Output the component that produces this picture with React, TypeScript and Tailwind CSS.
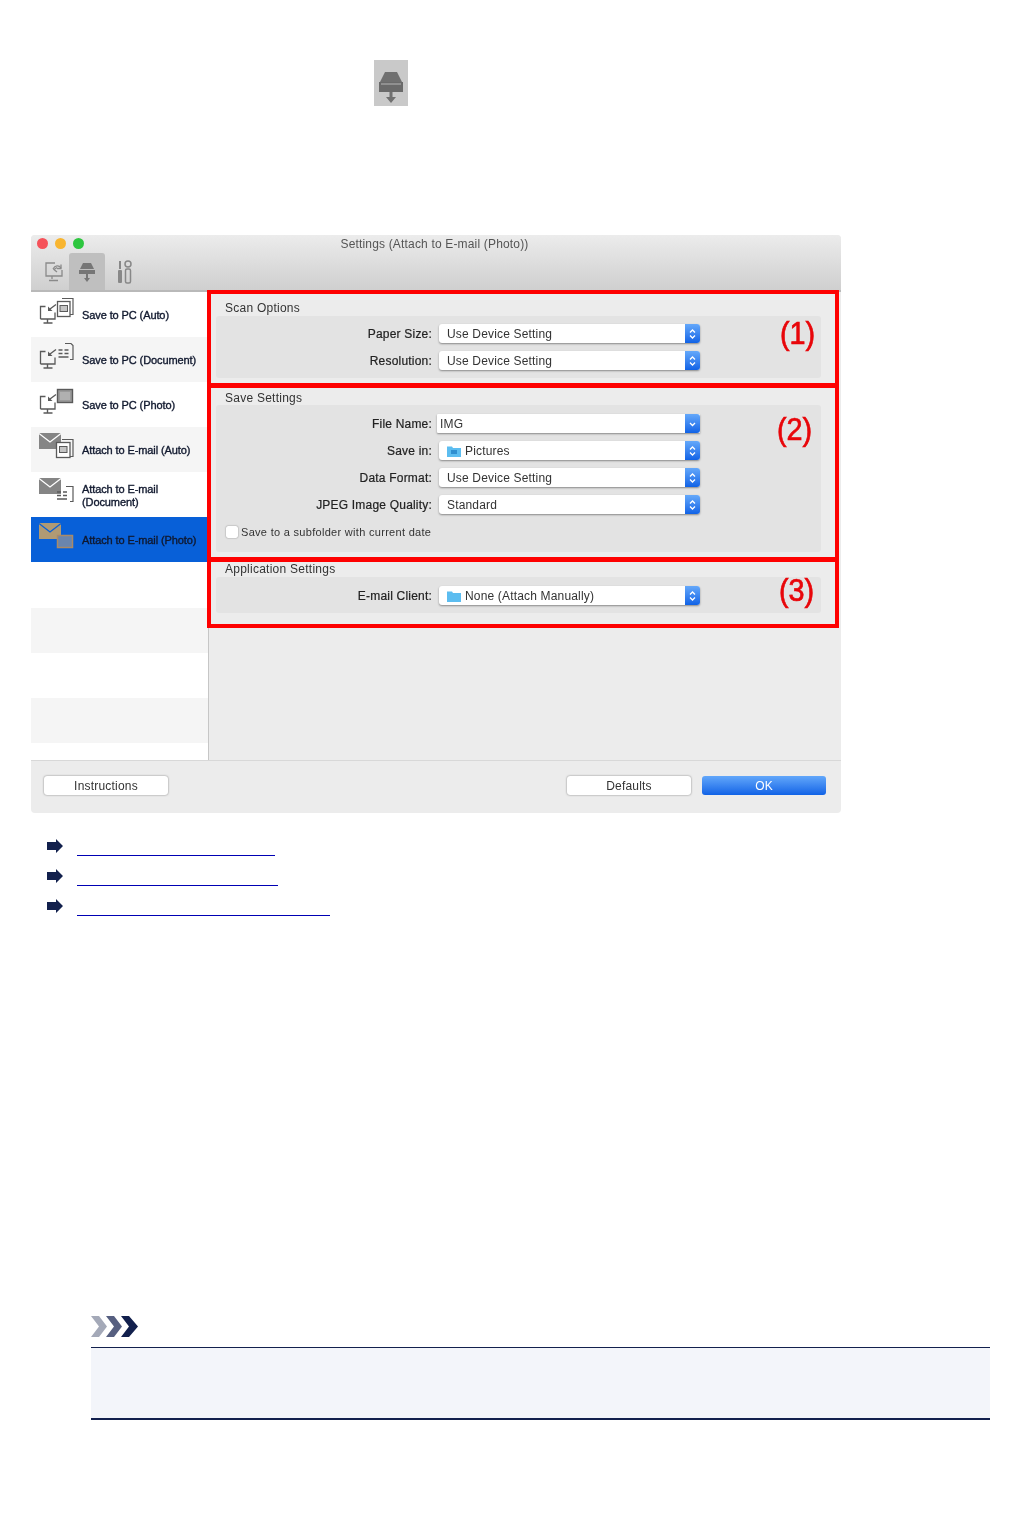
import React from "react";

const FONT = { fontFamily: '"Liberation Sans", Arial, sans-serif' };

function DocMark({ kind, color }: { kind: string; color: string }) {
  if (kind === "auto")
    return (
      <g fill="none" stroke={color}>
        <path d="M23 1.5h11v16h-3" strokeWidth="1.2" />
        <rect x="18.5" y="4.5" width="12.5" height="15" fill="#fff" strokeWidth="1.3" />
        <rect x="21" y="8.5" width="7.5" height="6" fill="#c4c4c4" strokeWidth="1" />
      </g>
    );
  if (kind === "doc")
    return (
      <g fill="none" stroke={color}>
        <path d="M26 1.5h6l2 2v14h-3" strokeWidth="1.2" />
        <path d="M19.5 8h4M25.5 8h4M19.5 11.5h4M25.5 11.5h4M19.5 15h10" strokeWidth="1.6" />
      </g>
    );
  return (
    <g>
      <rect x="18.5" y="2.5" width="15" height="13" fill="#9a9a9a" stroke={color} strokeWidth="1.4" />
      <rect x="21" y="5" width="10" height="8" fill="#b0b0b0" />
    </g>
  );
}

function SaveIcon({ kind }: { kind: string }) {
  const c = "#5a5a5a";
  return (
    <svg width="36" height="30" viewBox="0 0 36 30" className="shrink-0">
      <DocMark kind={kind} color={c} />
      <path d="M1.5 22V9.5h5M16 15.5V22H1.5" fill="none" stroke={c} strokeWidth="1.3" />
      <path d="M8.5 22v3.5M4.5 26h9" fill="none" stroke={c} strokeWidth="1.4" />
      <path d="M17 7.5L11 12" stroke={c} strokeWidth="1.3" />
      <path d="M9 9.5l0 4.5h4.5z" fill={c} />
    </svg>
  );
}

function MailIcon({ kind, selected }: { kind: string; selected?: boolean }) {
  const c = selected ? "#b09a74" : "#858585";
  const d = selected ? "#a98a68" : "#5a5a5a";
  return (
    <svg width="36" height="30" viewBox="0 0 36 30" className="shrink-0">
      <rect x="0" y="1" width="22" height="16" fill={c} />
      <path d="M0 1.5l11 8.5 11-8.5" fill="none" stroke={selected ? "#0860d8" : "#fff"} strokeWidth="1.3" />
      {kind === "auto" && (
        <g fill="none" stroke={d}>
          <path d="M23 7.5h11v17h-3" strokeWidth="1.2" />
          <rect x="17.5" y="10.5" width="13.5" height="15" fill="#fff" strokeWidth="1.3" />
          <rect x="20.5" y="14.5" width="7.5" height="6" fill="#c4c4c4" strokeWidth="1" />
        </g>
      )}
      {kind === "doc" && (
        <g fill="none" stroke={d}>
          <path d="M27 9.5h7v15h-3" strokeWidth="1.2" />
          <path d="M18 15h4M24 15h4M18 18.5h4M24 18.5h4M18 22h10" strokeWidth="1.6" />
        </g>
      )}
      {kind === "photo" && (
        <rect x="18.5" y="13.5" width="15" height="12" fill="#6a85ad" stroke={d} strokeWidth="1.5" />
      )}
    </svg>
  );
}

function Stepper({ single }: { single?: boolean }) {
  return (
    <div className="w-[15px] h-full shrink-0 rounded-r-[3px] bg-gradient-to-b from-[#64a8fa] to-[#0f62e6] flex items-center justify-center">
      <svg width="9" height="14" viewBox="0 0 9 14" fill="none" stroke="#fff" strokeWidth="1.3">
        {!single && <path d="M2 5.5L4.5 3 7 5.5" />}
        {single ? <path d="M2 6L4.5 8.5 7 6" /> : <path d="M2 8.5L4.5 11 7 8.5" />}
      </svg>
    </div>
  );
}

function FolderGlyph({ pic }: { pic?: boolean }) {
  return (
    <svg width="14" height="12" viewBox="0 0 14 12" className="shrink-0 mr-[4px]">
      <path d="M0 1.5h5l1 1.5h8v9H0z" fill="#5cbdf0" />
      {pic && <path d="M4 5h6v4H4z" fill="#2f8fd0" />}
    </svg>
  );
}

function Field({ label, value, folder, combo }: { label: string; value: string; folder?: "pic" | "plain"; combo?: boolean }) {
  return (
    <div className="flex items-center h-[19px]">
      <div className="w-[216px] text-right text-[12px] text-[#222] tracking-[0.2px] whitespace-nowrap [-webkit-text-stroke:0.2px_#222]">{label}</div>
      <div className={`h-[19px] flex items-center bg-white shadow-[0_1px_2px_rgba(0,0,0,0.4)] ${combo ? "ml-[5px] w-[263px] rounded-[1px]" : "ml-[7px] w-[261px] rounded-[3px]"}`}>
        <div className={`flex-1 flex items-center text-[12px] text-[#333] tracking-[0.17px] whitespace-nowrap ${combo ? "pl-[3px]" : "pl-[8px]"}`}>
          {folder && <FolderGlyph pic={folder === "pic"} />}
          {value}
        </div>
        <Stepper single={combo} />
      </div>
    </div>
  );
}

function Section({ title, num, className, labelClass, numClass, children }: { title: string; num: string; className: string; labelClass: string; numClass: string; children: React.ReactNode }) {
  return (
    <section className={`border-[4px] border-[#fe0000] -ml-[2px] mr-[2px] pl-[5px] pr-[14px] flex flex-col ${className}`}>
      <div className={`text-[12px] text-[#333] tracking-[0.25px] pl-[9px] leading-[14px] ${labelClass}`}>{title}</div>
      <div className="bg-[#e3e3e3] rounded-[3px] flex items-start">
        <div className="w-[484px]">{children}</div>
        <div className={`text-[#e8060a] text-[32px] leading-[34px] scale-x-[0.9] [-webkit-text-stroke:0.7px_#e8060a] ${numClass}`}>{num}</div>
      </div>
    </section>
  );
}

function Btn({ children, className }: { children: React.ReactNode; className: string }) {
  return <div className={`h-[19px] w-[124px] rounded-[3px] flex items-center justify-center text-[12px] tracking-[0.2px] ${className}`}>{children}</div>;
}

const rows = [
  { t: "Save to PC (Auto)", i: <SaveIcon kind="auto" />, bg: "bg-white" },
  { t: "Save to PC (Document)", i: <SaveIcon kind="doc" />, bg: "bg-[#f5f5f5]" },
  { t: "Save to PC (Photo)", i: <SaveIcon kind="photo" />, bg: "bg-white" },
  { t: "Attach to E-mail (Auto)", i: <MailIcon kind="auto" />, bg: "bg-[#f5f5f5]" },
  { t: "Attach to E-mail (Document)", i: <MailIcon kind="doc" />, bg: "bg-white" },
  { t: "Attach to E-mail (Photo)", i: <MailIcon kind="photo" selected />, bg: "bg-[#0860d8]" },
];

function Arrow() {
  return (
    <svg width="16" height="14" viewBox="0 0 16 14" className="shrink-0">
      <path d="M0 3h9V0l7 7-7 7v-3H0z" fill="#12204d" />
    </svg>
  );
}

export default function App() {
  return (
    <div style={FONT} className="relative bg-white w-[1021px] h-[1514px] overflow-hidden flex flex-col">
      <div className="ml-[374px] mt-[60px] w-[34px] h-[46px] bg-[#c9c9c9] flex items-center justify-center">
        <svg width="26" height="40" viewBox="0 0 26 40" className="[filter:blur(0.5px)]">
          <path d="M7 9h12l5 10H2z" fill="#707070" />
          <rect x="1" y="19" width="24" height="10" fill="#6a6a6a" />
          <rect x="3" y="20.5" width="20" height="1" fill="#b5b5b5" />
          <path d="M11.5 29h3v5h3.5L13 40l-5-6h3.5z" fill="#707070" />
        </svg>
      </div>

      <div className="ml-[31px] mt-[129px] w-[810px] h-[578px] rounded-[4px] bg-[#ececec] flex flex-col overflow-visible [filter:blur(0.6px)]">
        <div className="h-[57px] shrink-0 rounded-t-[4px] bg-gradient-to-b from-[#ececec] to-[#cfcfcf] border-b-[2px] border-[#b9b9b9] flex flex-col">
          <div className="relative h-[18px] pr-[3px] flex items-center justify-center text-[12px] text-[#555] tracking-[0.17px]">
            <div className="absolute left-[6px] top-[3px] flex gap-[7px]">
              <span className="w-[11px] h-[11px] rounded-full bg-[#f5525a]" />
              <span className="w-[11px] h-[11px] rounded-full bg-[#f8b530]" />
              <span className="w-[11px] h-[11px] rounded-full bg-[#2dc63f]" />
            </div>
            Settings (Attach to E-mail (Photo))
          </div>
          <div className="flex-1 flex items-stretch pl-[8px]">
            <div className="w-[30px] flex items-center justify-center">
              <svg width="22" height="22" viewBox="0 0 22 22" fill="none" stroke="#8a8a8a" strokeWidth="1.3">
                <path d="M12 2H3v13h16V9" />
                <path d="M9 15v3M6 19.5h9" />
                <path d="M10 8c2-4 6-4 8-1" />
                <path d="M18 3.5v4h-4" />
                <path d="M14 11l-3-2.5 3-2" />
              </svg>
            </div>
            <div className="w-[36px] bg-[#bfbfbf] rounded-t-[3px] flex items-center justify-center">
              <svg width="18" height="20" viewBox="0 0 18 20">
                <path d="M5 1h8l3 6H2z" fill="#767676" />
                <rect x="1" y="8" width="16" height="4" fill="#767676" />
                <path d="M8 12h2v4h2l-3 4-3-4h2z" fill="#767676" />
              </svg>
            </div>
            <div className="w-[38px] flex items-center justify-center">
              <svg width="16" height="24" viewBox="0 0 16 24">
                <path d="M4 1v8" stroke="#888" strokeWidth="2" />
                <rect x="2" y="10" width="4" height="13" rx="1" fill="#888" />
                <circle cx="12" cy="4" r="3" fill="none" stroke="#888" strokeWidth="1.5" />
                <rect x="9.5" y="9" width="5" height="14" rx="1.5" fill="none" stroke="#888" strokeWidth="1.5" />
              </svg>
            </div>
          </div>
        </div>

        <div className="flex-1 flex min-h-0">
          <div className="w-[178px] shrink-0 bg-white border-r border-[#c6c6c6] flex flex-col">
            {rows.map((r, k) => (
              <div key={k} className={`h-[45px] shrink-0 pl-[8px] flex items-center gap-[7px] ${r.bg}`}>
                <div className="-mt-[5px]">{r.i}</div>
                <div className="mt-[2px] text-[11px] leading-[13px] text-[#10182e] tracking-[-0.1px] [-webkit-text-stroke:0.35px_#10182e]">
                  {r.t === "Attach to E-mail (Document)" ? (
                    <>
                      Attach to E-mail
                      <br />
                      (Document)
                    </>
                  ) : (
                    r.t
                  )}
                </div>
              </div>
            ))}
            <div className="h-[46px] shrink-0 bg-white" />
            <div className="h-[45px] shrink-0 bg-[#f5f5f5]" />
            <div className="h-[45px] shrink-0 bg-white" />
            <div className="h-[45px] shrink-0 bg-[#f5f5f5]" />
          </div>

          <div className="flex-1 flex flex-col -mt-[2px] min-w-0">
            <Section title="Scan Options" num="(1)" className="h-[97px]" labelClass="pt-[7px] pb-[1px]" numClass="ml-[78px]">
              <div className="pt-[8px] pb-[8px] flex flex-col gap-[8px]">
                <Field label="Paper Size:" value="Use Device Setting" />
                <Field label="Resolution:" value="Use Device Setting" />
              </div>
            </Section>
            <Section title="Save Settings" num="(2)" className="h-[177px] -mt-[3px]" labelClass="pt-[3px]" numClass="ml-[75px] mt-[7px]">
              <div className="pt-[9px] flex flex-col gap-[8px]">
                <Field label="File Name:" value="IMG" combo />
                <Field label="Save in:" value="Pictures" folder="pic" />
                <Field label="Data Format:" value="Use Device Setting" />
                <Field label="JPEG Image Quality:" value="Standard" />
                <div className="flex items-center pl-[10px] mt-[2px] pb-[11px]">
                  <span className="w-[12px] h-[12px] bg-white rounded-[2px] shadow-[0_0_1.5px_rgba(0,0,0,0.55)]" />
                  <span className="ml-[3px] text-[11px] text-[#333] tracking-[0.3px]">Save to a subfolder with current date</span>
                </div>
              </div>
            </Section>
            <Section title="Application Settings" num="(3)" className="h-[70px] -mt-[3px]" labelClass="pb-[1px]" numClass="ml-[77px] -mt-[4px]">
              <div className="pt-[9px] pb-[8px]">
                <Field label="E-mail Client:" value="None (Attach Manually)" folder="plain" />
              </div>
            </Section>
          </div>
        </div>

        <div className="h-[53px] shrink-0 border-t border-[#d8d8d8] flex items-center pl-[13px] pr-[15px] pb-[3px]">
          <Btn className="bg-white text-[#333] shadow-[0_0_2px_rgba(0,0,0,0.5)]">Instructions</Btn>
          <div className="flex-1" />
          <Btn className="bg-white text-[#333] shadow-[0_0_2px_rgba(0,0,0,0.5)] mr-[11px]">Defaults</Btn>
          <Btn className="bg-gradient-to-b from-[#62a7fa] to-[#0f62e6] text-white">OK</Btn>
        </div>
      </div>

      <div className="mt-[18px] flex flex-col">
        {[198, 201, 253].map((w, k) => (
          <div key={k} className="h-[30px] pl-[47px] flex items-start">
            <div className="mt-[8px]">
              <Arrow />
            </div>
            <div style={{ width: w }} className="ml-[14px] h-[25px] border-b border-[#0000b4]" />
          </div>
        ))}
      </div>

      <div className="ml-[91px] mt-[395px] w-[899px]">
        <svg width="48" height="21" viewBox="0 0 48 21" className="block">
          <path d="M0 0h8l8 10.5L8 21H0l8-10.5z" fill="#a4a9b8" />
          <path d="M15 0h8l8 10.5L23 21h-8l8-10.5z" fill="#565f80" />
          <path d="M30 0h8l9 10.5L38 21h-8l8-10.5z" fill="#12204d" />
        </svg>
        <div className="mt-[10px] h-[73px] bg-[#f3f5fa] border-t border-b-2 border-[#12204d]" />
      </div>
    </div>
  );
}
